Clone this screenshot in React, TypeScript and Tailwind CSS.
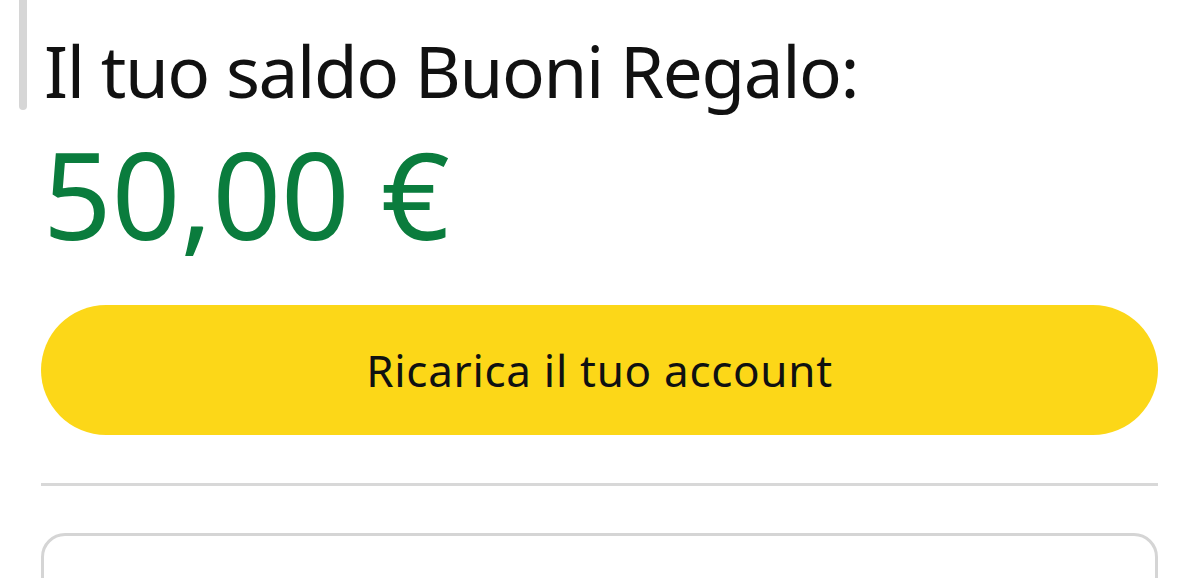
export default function App() {
  return (
    <div className="relative w-[1200px] h-[578px] overflow-hidden bg-white font-['Noto_Sans',sans-serif]">
      {/* scroll indicator */}
      <div className="absolute left-[19px] top-0 w-[8px] h-[110px] rounded-b-full bg-[#d6d6d6]" />

      <div className="pl-[41px] pr-[42px] pt-[35px]">
        <h1 className="ml-[3px] text-[71px] leading-none text-[#111111] tracking-[-1.4px]">
          Il tuo saldo Buoni Regalo:
        </h1>
        <div className="mt-[28px] ml-[2px] text-[120px] leading-none text-[#0a7c3d]">
          50,00 €
        </div>

        <button className="mt-[51px] w-full h-[130px] rounded-full bg-[#fcd718] text-[44px] tracking-[0.7px] text-[#0f1111] flex items-center justify-center">
          Ricarica il tuo account
        </button>

        <div className="mt-[48px] h-[3px] bg-[#d8d8d8]" />

        <div className="mt-[47px] h-[120px] rounded-[24px] border-[3px] border-[#d5d5d5]" />
      </div>
    </div>
  );
}
